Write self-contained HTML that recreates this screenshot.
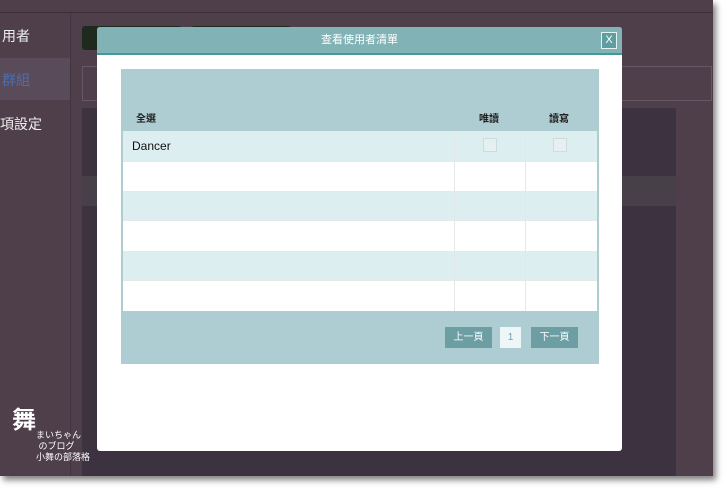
<!DOCTYPE html>
<html><head><meta charset="utf-8"><style>
body{margin:0;width:728px;height:491px;background:#fff;position:relative;overflow:hidden;font-family:"Liberation Sans","Noto Sans CJK TC",sans-serif}
.a{position:absolute}
</style></head><body>
<div class="a" style="left:0;top:0;width:713px;height:476px;background:#4e3f4b;box-shadow:3px 4px 6px rgba(0,0,0,.5)"></div>
<div class="a" style="left:0;top:12px;width:713px;height:1px;background:#3a2f38"></div>
<div class="a" style="left:70px;top:13px;width:1px;height:463px;background:#3f3440"></div>
<div class="a" style="left:0;top:58px;width:70px;height:42px;background:#5a4b5a"></div>
<div class="a" style="left:2px;top:26px;color:#eee;font-size:14px">用者</div>
<div class="a" style="left:2px;top:70px;color:#4a6fb0;font-size:14px">群組</div>
<div class="a" style="left:0;top:114px;color:#eee;font-size:14px">項設定</div>
<div class="a" style="left:82px;top:26px;width:100px;height:24px;background:#1e2a1e;border-radius:3px"></div>
<div class="a" style="left:191px;top:26px;width:100px;height:24px;background:#1e2a1e;border-radius:3px"></div>
<div class="a" style="left:82px;top:66px;width:628px;height:33px;border:1px solid #665765"></div>
<div class="a" style="left:82px;top:108px;width:594px;height:368px;background:#3d3340"></div>
<div class="a" style="left:82px;top:176px;width:594px;height:30px;background:#474049"></div>
<div class="a" style="left:97px;top:27px;width:525px;height:424px;background:#fff;border-radius:3px"></div>
<div class="a" style="left:97px;top:27px;width:525px;height:26px;background:#80b2b6;border-bottom:2px solid #3f9a9a;border-radius:3px 3px 0 0;color:#fff;font-size:11px;text-align:center;line-height:26px">查看使用者清單</div>
<div class="a" style="left:601px;top:32px;width:14px;height:15px;border:1px solid #e6f2f2;background:#5e9ea2;color:#fff;font-size:11px;line-height:15px;text-align:center">X</div>
<div class="a" style="left:121px;top:69px;width:478px;height:295px;background:#aecdd2"></div>
<div class="a" style="left:136px;top:110px;font-size:10px;font-weight:bold;color:#222">全選</div>
<div class="a" style="left:479px;top:110px;font-size:10px;font-weight:bold;color:#222">唯讀</div>
<div class="a" style="left:549px;top:110px;font-size:10px;font-weight:bold;color:#222">讀寫</div>
<div class="a" style="left:123px;top:131px;width:474px;height:180px;background:#fff">
<div class="a" style="left:0;top:0;width:474px;height:30px;background:#dceef0;border-bottom:1px solid #e4eaea"></div>
<div class="a" style="left:0;top:60px;width:474px;height:30px;background:#dceef0;border-top:1px solid #e4eaea;border-bottom:1px solid #e4eaea;box-sizing:border-box"></div>
<div class="a" style="left:0;top:120px;width:474px;height:30px;background:#dceef0;border-top:1px solid #e4eaea;border-bottom:1px solid #e4eaea;box-sizing:border-box"></div>
<div class="a" style="left:331px;top:0;width:1px;height:180px;background:#e2e8e8"></div>
<div class="a" style="left:402px;top:0;width:1px;height:180px;background:#e2e8e8"></div>
<div class="a" style="left:9px;top:8px;font-size:12px;color:#111">Dancer</div>
<div class="a" style="left:360px;top:7px;width:12px;height:12px;border:1px solid #cfdcdc;background:#e6f0f0"></div>
<div class="a" style="left:430px;top:7px;width:12px;height:12px;border:1px solid #cfdcdc;background:#e6f0f0"></div>
</div>
<div class="a" style="left:445px;top:327px;width:47px;height:21px;background:#6d9ea3;color:#fff;font-size:10px;line-height:21px;text-align:center">上一頁</div>
<div class="a" style="left:500px;top:327px;width:21px;height:21px;background:#eef6f7;color:#6aa0b0;font-size:10px;line-height:21px;text-align:center">1</div>
<div class="a" style="left:531px;top:327px;width:47px;height:21px;background:#6d9ea3;color:#fff;font-size:10px;line-height:21px;text-align:center">下一頁</div>
<div class="a" style="left:12px;top:400px;color:#fff;font-size:24px;font-weight:bold">舞</div>
<div class="a" style="left:36px;top:430px;color:#fff;font-size:9px;line-height:11px">まいちゃん<br>&nbsp;のブログ<br>小舞の部落格</div>
</body></html>
